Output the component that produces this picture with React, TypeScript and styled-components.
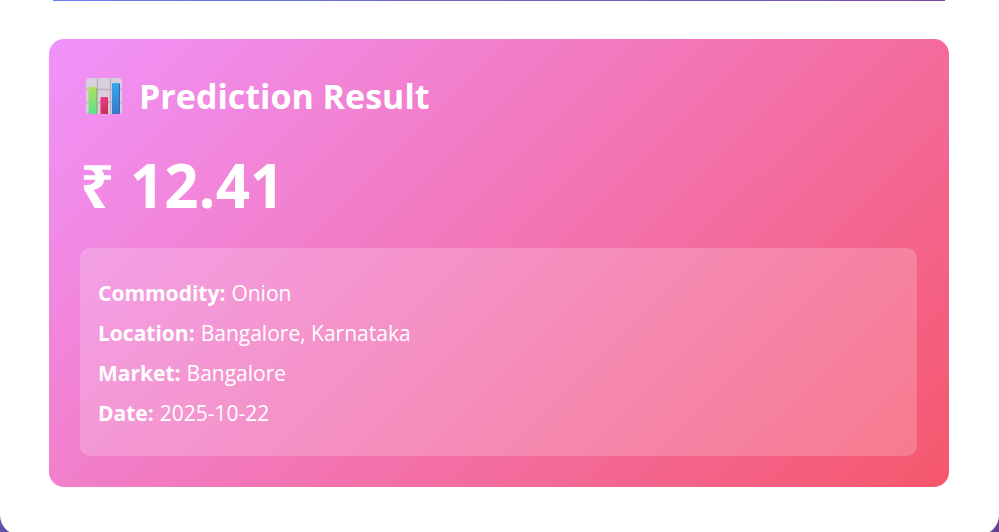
import React from 'react';
import styled, { createGlobalStyle } from 'styled-components';

const GlobalStyle = createGlobalStyle`
  * { box-sizing: border-box; }
  body {
    margin: 0;
    font-family: 'Segoe UI', 'Open Sans', 'Noto Sans', sans-serif;
    color: #fff;
  }
`;

const Page = styled.div`
  height: 100vh;
  overflow: hidden;
  background: linear-gradient(90deg, #5f53a8, #654496);
`;

const Sheet = styled.main`
  padding: 0 50px 48px 49px;
  background: #fff;
  border-radius: 0 0 20px 20px;
`;

const ActionEdge = styled.div`
  height: 1px;
  margin: 0 4px 38px;
  background: linear-gradient(90deg, #667eea, #764ba2);
`;

const ResultCard = styled.section`
  padding: 31px 32px 31px 31px;
  border-radius: 15px;
  background: linear-gradient(135deg, #f093fb 0%, #f5576c 100%);
`;

const Title = styled.h2`
  display: flex;
  align-items: center;
  gap: 17px;
  margin: 0;
  padding-left: 6px;
  font-size: 34px;
  line-height: 52px;
  font-weight: 700;
`;

const ChartIcon = styled.svg`
  width: 36px;
  height: 36px;
  flex: none;
`;

const Price = styled.p`
  margin: 22px 0;
  font-size: 60px;
  line-height: 82px;
  font-weight: 700;
`;

const Details = styled.dl`
  margin: 0;
  padding: 25px 18px 23px;
  border-radius: 10px;
  background: rgba(255, 255, 255, 0.2);
`;

const DetailRow = styled.div`
  display: flex;
  gap: 6px;
  font-size: 21px;
  line-height: 40px;
`;

const Label = styled.dt`
  font-weight: 700;
`;

const Value = styled.dd`
  margin: 0;
`;

const details = [
  { label: 'Commodity', value: 'Onion' },
  { label: 'Location', value: 'Bangalore, Karnataka' },
  { label: 'Market', value: 'Bangalore' },
  { label: 'Date', value: '2025-10-22' },
];

function BarChart() {
  return (
    <ChartIcon viewBox="0 0 36 36" aria-hidden="true">
      <defs>
        <linearGradient id="green" x1="0" y1="0" x2="0" y2="1">
          <stop offset="0" stopColor="#b2df5c" />
          <stop offset="1" stopColor="#5fe28c" />
        </linearGradient>
        <linearGradient id="red" x1="0" y1="0" x2="0" y2="1">
          <stop offset="0" stopColor="#ee3b80" />
          <stop offset="1" stopColor="#cb2f63" />
        </linearGradient>
        <linearGradient id="blue" x1="0" y1="0" x2="0" y2="1">
          <stop offset="0" stopColor="#36a6f4" />
          <stop offset="1" stopColor="#3978c4" />
        </linearGradient>
      </defs>
      <rect width="36" height="36" rx="4" fill="#d8cfdf" />
      <path d="M0 11.5H36M0 24.5H36M11.5 0V36M24.5 0V36" stroke="#b9aec2" strokeWidth="1.3" />
      <path d="M2.500 36V10Q2.500 9 3.500 9H10Q11 9 11 10V36Z" fill="url(#green)" />
      <path d="M14.500 36V20Q14.500 19 15.500 19H21Q22 19 22 20V36Z" fill="url(#red)" />
      <path d="M26 36V6Q26 5 27 5H33Q34 5 34 6V36Z" fill="url(#blue)" />
      <path d="M10.500 10V36" stroke="#7ac653" strokeWidth="1" />
      <path d="M21.500 20V36" stroke="#bd3060" strokeWidth="1" />
      <path d="M33.500 6V36" stroke="#306cac" strokeWidth="1" />
    </ChartIcon>
  );
}

export default function App() {
  return (
    <Page>
      <GlobalStyle />
      <Sheet>
        <ActionEdge />
        <ResultCard>
          <Title>
            <BarChart />
            Prediction Result
          </Title>
          <Price>₹ 12.41</Price>
          <Details>
            {details.map(({ label, value }) => (
              <DetailRow key={label}>
                <Label>{label}:</Label>
                <Value>{value}</Value>
              </DetailRow>
            ))}
          </Details>
        </ResultCard>
      </Sheet>
    </Page>
  );
}
